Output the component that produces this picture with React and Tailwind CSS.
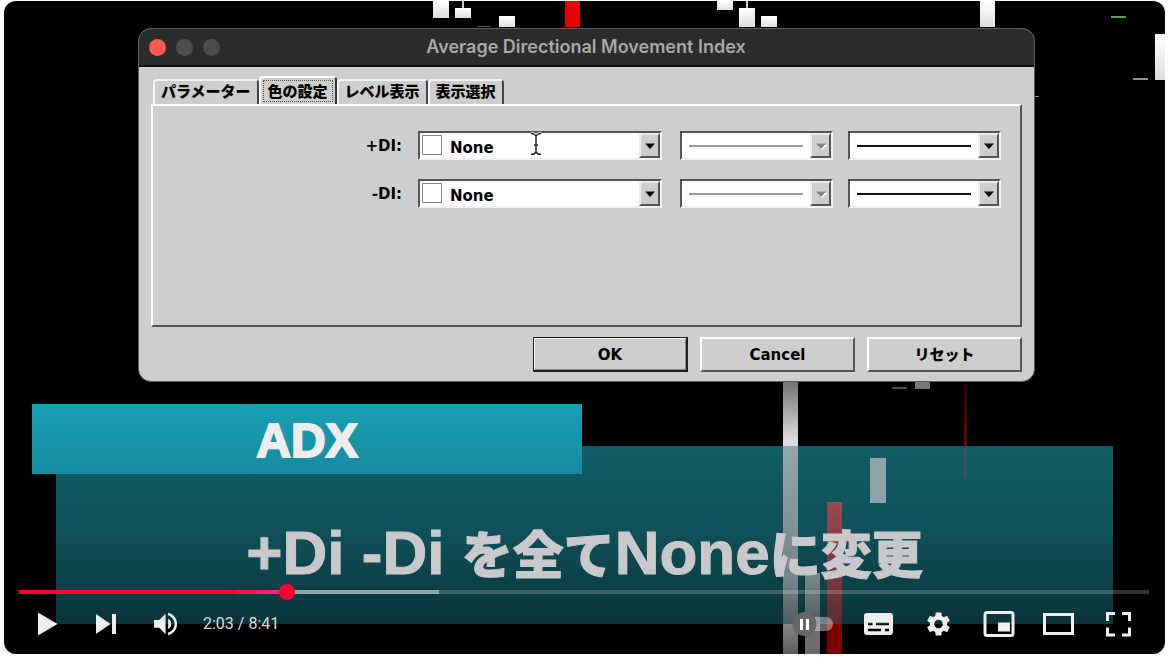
import { useState } from "react"

const RAISED = "border-2 border-t-white border-l-white border-r-[#555] border-b-[#555]"

const TABS = ["パラメーター", "色の設定", "レベル表示", "表示選択"]


function Chart() {

  return (

    <svg
      viewBox="4 1 1161 653"
      preserveAspectRatio="xMidYMin slice"
      className="absolute inset-0 w-full h-full"
      aria-hidden="true"
    >
      <defs>
        <linearGradient id="candle" x1="0" y1="0" x2="0" y2="1">
          <stop offset="0" stopColor="#fff" />
          <stop offset="1" stopColor="#dedede" />
        </linearGradient>
        <linearGradient id="tall" gradientUnits="userSpaceOnUse" x1="0" y1="382" x2="0" y2="654">
          <stop offset="0" stopColor="#747474" />
          <stop offset="0.22" stopColor="#dedede" />
          <stop offset="0.88" stopColor="#8a8a8a" />
          <stop offset="1" stopColor="#5c5c5c" />
        </linearGradient>
        <linearGradient id="drop" x1="0" y1="0" x2="0" y2="1">
          <stop offset="0" stopColor="#2a0000" />
          <stop offset="1" stopColor="#6a0808" />
        </linearGradient>
      </defs>

      <g fill="url(#candle)">
        <rect x="433" y="1" width="16" height="17" />
        <rect x="455" y="8" width="16" height="10" />
        <rect x="499" y="16" width="16" height="11" />
        <rect x="717" y="1" width="16" height="9" />
        <rect x="739" y="8" width="16" height="19" />
        <rect x="761" y="16" width="16" height="11" />
        <rect x="980" y="1" width="15" height="26" />
        <rect x="1155" y="34" width="10" height="46" />
      </g>
      <rect x="462" y="1" width="2" height="7" fill="#ccc" />
      <rect x="746" y="1" width="2" height="7" fill="#ccc" />
      <rect x="477" y="26" width="14" height="1" fill="#555" />
      <rect x="565" y="1" width="15" height="26" fill="#e60000" />
      <rect x="1111" y="16" width="15" height="2" fill="#5f9a5f" />
      <rect x="1133" y="78" width="15" height="2" fill="#7f9f80" />
      <rect x="1035" y="96" width="4" height="1" fill="#999" />

      <rect x="783" y="382" width="15" height="272" fill="url(#tall)" />
      <rect x="805" y="573" width="15" height="81" fill="#6c6c6c" />
      <rect x="827" y="502" width="15" height="152" fill="#7d0000" />
      <rect x="892" y="387" width="15" height="2" fill="#3c553c" />
      <rect x="915" y="382" width="15" height="7" fill="#777" />
      <rect x="964" y="384" width="3" height="62" fill="url(#drop)" />
    </svg>
  )
}


function CaptionCandles() {

  return (

    <svg
      viewBox="56 446 1057 178"
      preserveAspectRatio="none"
      className="absolute inset-0 w-full h-full"
      aria-hidden="true"
    >
      <defs>
        <linearGradient id="tint" gradientUnits="userSpaceOnUse" x1="0" y1="446" x2="0" y2="624">
          <stop offset="0" stopColor="#93a6ab" />
          <stop offset="0.75" stopColor="#758488" />
          <stop offset="1" stopColor="#515b5e" />
        </linearGradient>
        <linearGradient id="redTint" x1="0" y1="0" x2="0" y2="1">
          <stop offset="0" stopColor="#9a4a53" />
          <stop offset="1" stopColor="#5c2c33" />
        </linearGradient>
      </defs>
      <rect x="783" y="446" width="15" height="178" fill="url(#tint)" />
      <rect x="870" y="458" width="16" height="45" fill="#8fa3a8" />
      <rect x="805" y="573" width="15" height="51" fill="url(#tint)" />
      <rect x="827" y="502" width="15" height="122" fill="url(#redTint)" />
      <rect x="964" y="446" width="3" height="32" fill="#3b4f5b" />
    </svg>
  )
}


function Arrow({ disabled }) {

  return (

    <span className="pointer-events-none flex w-[21px] items-center justify-center bg-[#cecece] border-2 border-t-[#eee] border-l-[#eee] border-r-[#555] border-b-[#555]">
      <svg viewBox="0 0 12 8" className="w-3 h-2">
        {disabled && <path d="M2 3h10L7 8z" fill="#fff" />}
        <path d="M1 1.5h10L6 7z" fill={disabled ? "#858585" : "#000"} />
      </svg>
    </span>
  )
}


function Combo({ className, disabled, children }) {

  return (

    <div className={`relative flex h-[29px] border-2 border-t-[#555] border-l-[#555] border-r-[#f2f2f2] border-b-[#f2f2f2] bg-white ${className}`}>
      {children}
      <Arrow disabled={disabled} />
    </div>
  )
}


function LineCombo({ label, disabled }) {

  return (

    <Combo className="w-[153px]" disabled={disabled}>
      <span className="flex flex-1 items-center px-[7px]">
        <span className={disabled ? "w-full h-0.5 bg-[#999]" : "w-full h-0.5 bg-[#111]"} />
      </span>
      <select aria-label={label} disabled={disabled} className="absolute inset-0 opacity-0">
        <option></option>
      </select>
    </Combo>
  )
}


function ColorRow({ id, label }) {

  return (

    <div className="flex items-center justify-end pr-[19px]">

      <label htmlFor={id} className="mr-4 pt-0.5 text-[15px] font-bold">
        {label}
      </label>

      <Combo className="w-[244px] mr-[18px]">
        <span className="m-0.5 w-5 h-5 border border-[#888] bg-white" />
        <select
          id={id}
          className="flex-1 appearance-none bg-white pl-1.5 pt-1 text-[15px] font-bold text-black"
        >
          <option>None</option>
        </select>
      </Combo>

      <div className="mr-[15px]">
        <LineCombo label={`${label} style`} disabled />
      </div>
      <LineCombo label={`${label} width`} />

    </div>
  )
}


function IndexDialog() {

  const [tab, setTab] = useState(1)


  return (

    <section className="relative ml-[134px] mr-[130px] mt-[27px] overflow-hidden rounded-[13px] border border-[#5c5c5c] bg-[#cecece] text-black font-['DejaVu_Sans','Noto_Sans_CJK_JP',sans-serif]">

      <header className="relative flex h-[38px] items-center gap-2.5 border-b-2 border-[#0c0c0c] bg-[#2c2c2c] pl-2.5">
        <button aria-label="Close" className="size-[17px] rounded-full bg-[#fe5850]" />
        <button aria-label="Minimize" className="size-[17px] rounded-full bg-[#4d4d4d]" />
        <button aria-label="Zoom" className="size-[17px] rounded-full bg-[#4d4d4d]" />
        <h1 className="flex-1 pr-[92px] text-center text-lg leading-6 font-semibold text-[#a9a9a9] font-['Inter',sans-serif]">
          Average Directional Movement Index
        </h1>
      </header>

      <div className="px-3 pt-[9px] pb-[9px]">

        <div role="tablist" className="flex h-[28px] items-end pl-0.5">
          {
            TABS.map((name, i) => (

              <button
                key={name}
                role="tab"
                aria-selected={tab === i}
                onClick={() => setTab(i)}
                className={
                  tab === i
                    ? "h-[28px] rounded-t-sm border-2 border-b-0 border-t-white border-l-white border-r-[#333] p-0.5"
                    : "h-[25px] rounded-t-sm border-2 border-b-0 border-t-[#f4f4f4] border-l-[#f4f4f4] border-r-[#444] px-1.5 pb-1"
                }
              >
                <span
                  className={
                    tab === i
                      ? "flex h-full items-center border border-dotted border-[#555] px-1 text-[15px] leading-5 font-black font-['Noto_Sans_CJK_JP',sans-serif]"
                      : "block text-[15px] leading-5 font-black font-['Noto_Sans_CJK_JP',sans-serif]"
                  }
                >
                  {name}
                </span>
              </button>
            ))
          }
        </div>

        <div className={`flex min-h-[223px] flex-col gap-[19px] pt-[25px] ${RAISED}`}>
          <ColorRow id="plus-di" label="+DI:" />
          <ColorRow id="minus-di" label="-DI:" />
        </div>

        <div className="mt-2.5 flex justify-end gap-3 text-[15px] font-bold">
          <button className="h-[35px] w-[155px] border border-[#222] border-r-2 border-b-2 pt-0.5 shadow-[inset_1px_1px_0_#fff,inset_-1px_-1px_0_#888]">
            OK
          </button>
          <button className={`h-[35px] w-[155px] pt-0.5 ${RAISED}`}>
            Cancel
          </button>
          <button className={`h-[35px] w-[155px] pt-0.5 font-black ${RAISED}`}>
            リセット
          </button>
        </div>

      </div>

      {/* text cursor over the first drop-down */}
      <svg viewBox="0 0 14 24" className="pointer-events-none absolute left-[390px] top-[103px] w-3.5 h-6">
        <path d="M2 1.5q4 0 5 3q1-3 5-3M7 4v16M2 22.500q4 0 5-3q1 3 5 3M5 13h4" fill="none" stroke="#fff" strokeWidth="3" />
        <path d="M2 1.5q4 0 5 3q1-3 5-3M7 4v16M2 22.500q4 0 5-3q1 3 5 3M5 13h4" fill="none" stroke="#222" strokeWidth="1.500" />
      </svg>

    </section>
  )
}


function Caption() {

  return (

    <div className="relative mt-[22px] font-['Liberation_Sans','Noto_Sans_CJK_JP',sans-serif]">

      <h2 className="relative z-10 ml-7 flex h-[70px] w-[550px] items-center justify-center bg-linear-to-b from-[#199fb5] to-[#168b9d] pt-1 text-5xl font-bold text-[#ededed] [-webkit-text-stroke:2px_#ededed]">
        ADX
      </h2>

      <div className="relative -mt-7 ml-[52px] mr-[52px] h-[178px] bg-linear-to-b from-[#115c67] via-[#0f4f59] to-[#0a3439]">
        <CaptionCandles />
        <p className="relative pt-[72px] text-center text-[62px] leading-[70px] font-bold whitespace-nowrap text-[#c9c9cb] [-webkit-text-stroke:1px_#c9c9cb]">
          +Di -Di <span className="text-[51px] font-black">を全て</span>None<span className="text-[51px] font-black">に変更</span>
        </p>
      </div>

    </div>
  )
}


function ControlButton({ label, children }) {

  return (

    <button aria-label={label} className="h-12 w-15">
      <svg viewBox="0 0 60 48" className="h-12 w-15" fill="#eee">
        {children}
      </svg>
    </button>
  )
}


function Controls() {

  const [time, setTime] = useState(123.6)

  const played = (time / 521) * 100


  return (

    <div className="absolute inset-x-0 bottom-0 pb-1.5 pl-[13px] pr-[17px]">

      <div className="relative ml-0.5 mr-[-1px] h-1 bg-white/20">
        <div className="absolute inset-y-0 left-0 w-[37.2%] bg-[#8fa5a9]" />
        <div
          className="absolute inset-y-0 left-0 bg-linear-to-r from-[#f03] from-80% to-[#ff2791]"
          style={{ width: `${played}%` }}
        />
        <div
          className="absolute -top-1.5 size-4 -translate-x-1/2 rounded-full bg-[#f03]"
          style={{ left: `${played}%` }}
        />
        <input
          type="range"
          aria-label="Seek"
          min="0"
          max="521"
          step="any"
          value={time}
          onChange={(e) => setTime(Number(e.target.value))}
          className="absolute inset-x-0 -top-1.5 h-4 w-full opacity-0"
        />
      </div>

      <div className="mt-1.5 flex items-center">

        <ControlButton label="Play">
          <path d="M21 12.500L40.500 24L21 35.500z" />
        </ControlButton>
        <ControlButton label="Next">
          <path d="M19 14L33.500 24L19 34zM35 14h4v20h-4z" />
        </ControlButton>
        <ControlButton label="Mute">
          <path
            transform="translate(13.200 8.600) scale(1.280)"
            d="M3 9v6h4l5 5V4L7 9H3zm13.500 3c0-1.770-1.020-3.290-2.500-4.030v8.050c1.480-.730 2.500-2.250 2.500-4.020zM14 3.230v2.060c2.890.860 5 3.540 5 6.710s-2.110 5.850-5 6.710v2.060c4.010-.910 7-4.490 7-8.770s-2.990-7.860-7-8.770z"
          />
        </ControlButton>

        <span className="ml-1.5 flex-1 text-base text-[#ddd] font-['Roboto',sans-serif]">
          2:03 / 8:41
        </span>

        <ControlButton label="Autoplay">
          <rect x="12" y="17" width="33" height="14" rx="7" fill="#fff" fillOpacity="0.4" />
          <circle cx="16.500" cy="24" r="12" fill="#666" />
          <path d="M12 19h3v11h-3zM18 19h3v11h-3z" fill="#fff" />
        </ControlButton>
        <ControlButton label="Subtitles">
          <path
            fillRule="evenodd"
            d="M19 13h23a3 3 0 0 1 3 3v16a3 3 0 0 1-3 3h-23a3 3 0 0 1-3-3v-16a3 3 0 0 1 3-3zM20 22.700v2.500h4.500v-2.500zM28 22.700v2.500h13v-2.500zM20 28.700v2.500h13v-2.500zM37 28.700v2.500h4v-2.500z"
          />
        </ControlButton>
        <ControlButton label="Settings">
          <path
            transform="translate(16.100 9.600) scale(1.200)"
            d="M19.140 12.940c.040-.300.060-.610.060-.940 0-.320-.020-.640-.070-.940l2.030-1.580c.180-.140.230-.410.120-.610l-1.920-3.320c-.120-.220-.370-.290-.590-.220l-2.390.960c-.500-.380-1.030-.700-1.620-.940l-.360-2.540c-.040-.240-.240-.410-.480-.410h-3.840c-.240 0-.430.170-.470.410l-.360 2.540c-.590.240-1.130.570-1.620.940l-2.390-.960c-.220-.080-.470 0-.590.220L2.740 8.870c-.120.210-.080.470.120.610l2.030 1.580c-.050.300-.090.630-.090.940s.020.640.070.940l-2.030 1.580c-.180.140-.230.410-.120.610l1.920 3.320c.120.220.370.290.590.220l2.390-.960c.500.380 1.030.700 1.620.940l.360 2.540c.050.240.240.410.480.410h3.840c.240 0 .440-.170.470-.410l.360-2.540c.590-.240 1.130-.560 1.620-.940l2.390.960c.220.080.470 0 .590-.220l1.920-3.320c.120-.220.070-.470-.120-.610l-2.010-1.580zM12 15.600c-1.980 0-3.600-1.620-3.600-3.600s1.620-3.600 3.600-3.600 3.600 1.620 3.600 3.600-1.620 3.600-3.600 3.600z"
          />
        </ControlButton>
        <ControlButton label="Miniplayer">
          <rect x="17" y="12.500" width="28" height="23" rx="2" fill="none" stroke="#eee" strokeWidth="3" />
          <path d="M30 22.500h12v9h-12z" />
        </ControlButton>
        <ControlButton label="Theater mode">
          <rect x="16.500" y="14.500" width="28" height="19" fill="none" stroke="#eee" strokeWidth="3" />
        </ControlButton>
        <ControlButton label="Full screen">
          <path
            d="M19.500 21v-7.500h7.500M34 13.500h7.500v7.500M41.500 27.500v7.500h-7.500M27 35h-7.500v-7.500"
            fill="none"
            stroke="#eee"
            strokeWidth="3"
          />
        </ControlButton>

      </div>

    </div>
  )
}


function App() {

  return (

    <main className="relative mx-1 mt-px flex flex-col overflow-hidden rounded-xl bg-black pb-[30px]">
      <Chart />
      <IndexDialog />
      <Caption />
      <Controls />
    </main>
  )
}

export default App
